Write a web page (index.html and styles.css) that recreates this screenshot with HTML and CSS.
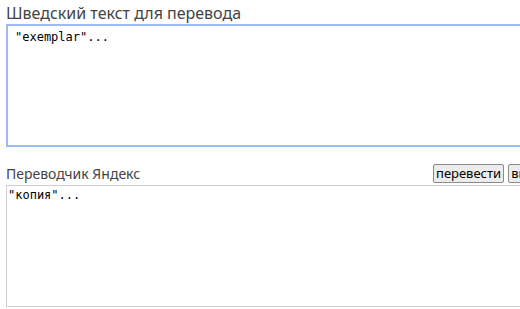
FILE: index.html
```html
<!DOCTYPE html>
<html lang="ru">

<head>
    <meta charset="UTF-8">
    <meta name="viewport" content="width=device-width, initial-scale=1.0">
    <title>Перевод</title>

    <link rel="stylesheet" href="styles.css">
</head>

<body>
    <div class="page">
        <label class="caption" for="source">Шведский текст для перевода</label>
        <textarea id="source" class="source">"exemplar"...</textarea>

        <div class="toolbar">
            <span class="caption caption-small">Переводчик Яндекс</span>
            <button type="button">перевести</button>
            <button type="button">выполнить</button>
        </div>
        <div class="result">"копия"...</div>
    </div>
</body>

</html>
```

FILE: styles.css
```css
body {
    margin: 0;
    overflow: hidden;
    font-family: "Noto Sans", "Open Sans", sans-serif;
}

.page {
    width: 600px;
    padding: 3px 0 0 6px;
}

.caption {
    display: block;
    font-size: 16px;
    line-height: 20px;
    color: #444;
}

.caption-small {
    font-size: 14px;
    line-height: 19px;
}

.source {
    display: block;
    box-sizing: border-box;
    width: 560px;
    height: 123px;
    margin: 1px 0 0;
    padding: 4px 7px;
    font-family: "DejaVu Sans Mono", monospace;
    font-size: 12px;
    color: #000;
    border: 2px solid #9dbbf2;
    resize: none;
    outline: none;
}

.toolbar {
    display: flex;
    align-items: flex-end;
    gap: 4px;
    margin-top: 17px;
}

.toolbar .caption {
    width: 423px;
}

button {
    padding: 0 2px;
    height: 19px;
    font-family: "Noto Sans", "Open Sans", sans-serif;
    font-size: 13px;
    line-height: 15px;
    color: #000;
    background-color: #ececec;
    border: 1px solid #8a8a8a;
    border-radius: 2px;
}

.result {
    box-sizing: border-box;
    width: 560px;
    height: 122px;
    margin-top: 2px;
    padding: 2px 1px;
    font-family: "DejaVu Sans Mono", monospace;
    font-size: 12px;
    line-height: 14px;
    border: 1px solid #d0d0d0;
}
```
